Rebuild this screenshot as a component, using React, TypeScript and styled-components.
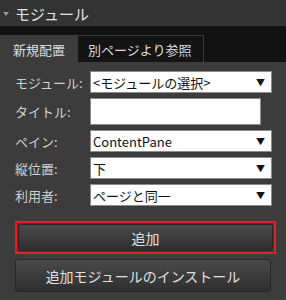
import { Fragment } from "react";
import styled, { createGlobalStyle } from "styled-components";

const Global = createGlobalStyle`
  html, body {
    margin: 0;
    padding: 0;
    background: #3c3c3c;
  }
  body {
    font-family: "Noto Sans CJK JP", "Noto Sans", sans-serif;
  }
`;

const Panel = styled.div`
  width: 286px;
  height: 300px;
  background: #3c3c3c;
  overflow: hidden;
`;

const Header = styled.div`
  height: 26px;
  background: #333333;
  display: flex;
  align-items: center;
  gap: 6px;
  padding-left: 3px;
  color: #e2e2e2;
  font-size: 15px;
`;

const Caret = styled.span`
  width: 0;
  height: 0;
  border-left: 3px solid transparent;
  border-right: 3px solid transparent;
  border-top: 4px solid #9a9a9a;
  margin-top: 2px;
`;

const TabBar = styled.div`
  height: 36px;
  background: #121212;
  display: flex;
  align-items: flex-end;
`;

const Tab = styled.div<{ $active?: boolean }>`
  height: 27px;
  box-sizing: border-box;
  padding: 0 11px 0 ${(p) => (p.$active ? "12px" : "10px")};
  display: flex;
  align-items: center;
  font-size: 13px;
  color: #dcdcdc;
  background: ${(p) => (p.$active ? "#3c3c3c" : "#141414")};
  border: 1px solid ${(p) => (p.$active ? "#3c3c3c" : "#3a3a3a")};
  border-bottom: none;
`;

const Form = styled.div`
  display: grid;
  grid-template-columns: 75px 1fr;
  grid-template-rows: 22px 27px 22px 22px 22px;
  row-gap: 5px;
  align-items: center;
  padding: 9px 14px 0 15px;
`;

const Label = styled.label`
  color: #cfcfcf;
  font-size: 13px;
  line-height: 1;
  white-space: nowrap;
`;

const SelectBox = styled.div`
  height: 22px;
  box-sizing: border-box;
  background: #ffffff;
  border: 1px solid #8a8a8a;
  display: flex;
  align-items: center;
  justify-content: space-between;
  padding: 0 6px 0 2px;
  font-size: 13px;
  line-height: 1;
  color: #111;
`;

const Arrow = styled.span`
  font-size: 9px;
  color: #111;
`;

const TextInput = styled.div`
  width: 171px;
  height: 27px;
  box-sizing: border-box;
  background: #ffffff;
  border: 1px solid #8a8a8a;
`;

const Actions = styled.div`
  display: flex;
  flex-direction: column;
  gap: 5px;
  padding: 15px 10px 0 15px;
`;

const Highlight = styled.div`
  border: 2px solid #e3202a;
  padding: 1px;
  width: 261px;
  box-sizing: border-box;
`;

const Button = styled.div<{ $w?: number }>`
  height: 27px;
  ${(p) => (p.$w ? `width: ${p.$w}px;` : "")}
  box-sizing: border-box;
  border: 1px solid #262626;
  border-radius: 3px;
  background: linear-gradient(#4a4a4a, #2e2e2e);
  color: #e0e0e0;
  font-size: 14px;
  display: flex;
  align-items: center;
  justify-content: center;
`;

const Tall = styled(Button)`
  height: 33px;
`;

const rows: { label: string; value: string }[] = [
  { label: "ペイン:", value: "ContentPane" },
  { label: "縦位置:", value: "下" },
  { label: "利用者:", value: "ページと同一" },
];

export default function App() {
  return (
    <Panel>
      <Global />
      <Header>
        <Caret />
        モジュール
      </Header>
      <TabBar>
        <Tab $active>新規配置</Tab>
        <Tab>別ページより参照</Tab>
      </TabBar>
      <Form>
        <Label>モジュール:</Label>
        <SelectBox>
          &lt;モジュールの選択&gt;
          <Arrow>▼</Arrow>
        </SelectBox>
        <Label>タイトル:</Label>
        <TextInput />
        {rows.map((r) => (
          <Fragment key={r.label}>
            <Label>{r.label}</Label>
            <SelectBox>
              {r.value}
              <Arrow>▼</Arrow>
            </SelectBox>
          </Fragment>
        ))}
      </Form>
      <Actions>
        <Highlight>
          <Button>追加</Button>
        </Highlight>
        <Tall $w={256}>追加モジュールのインストール</Tall>
      </Actions>
    </Panel>
  );
}
